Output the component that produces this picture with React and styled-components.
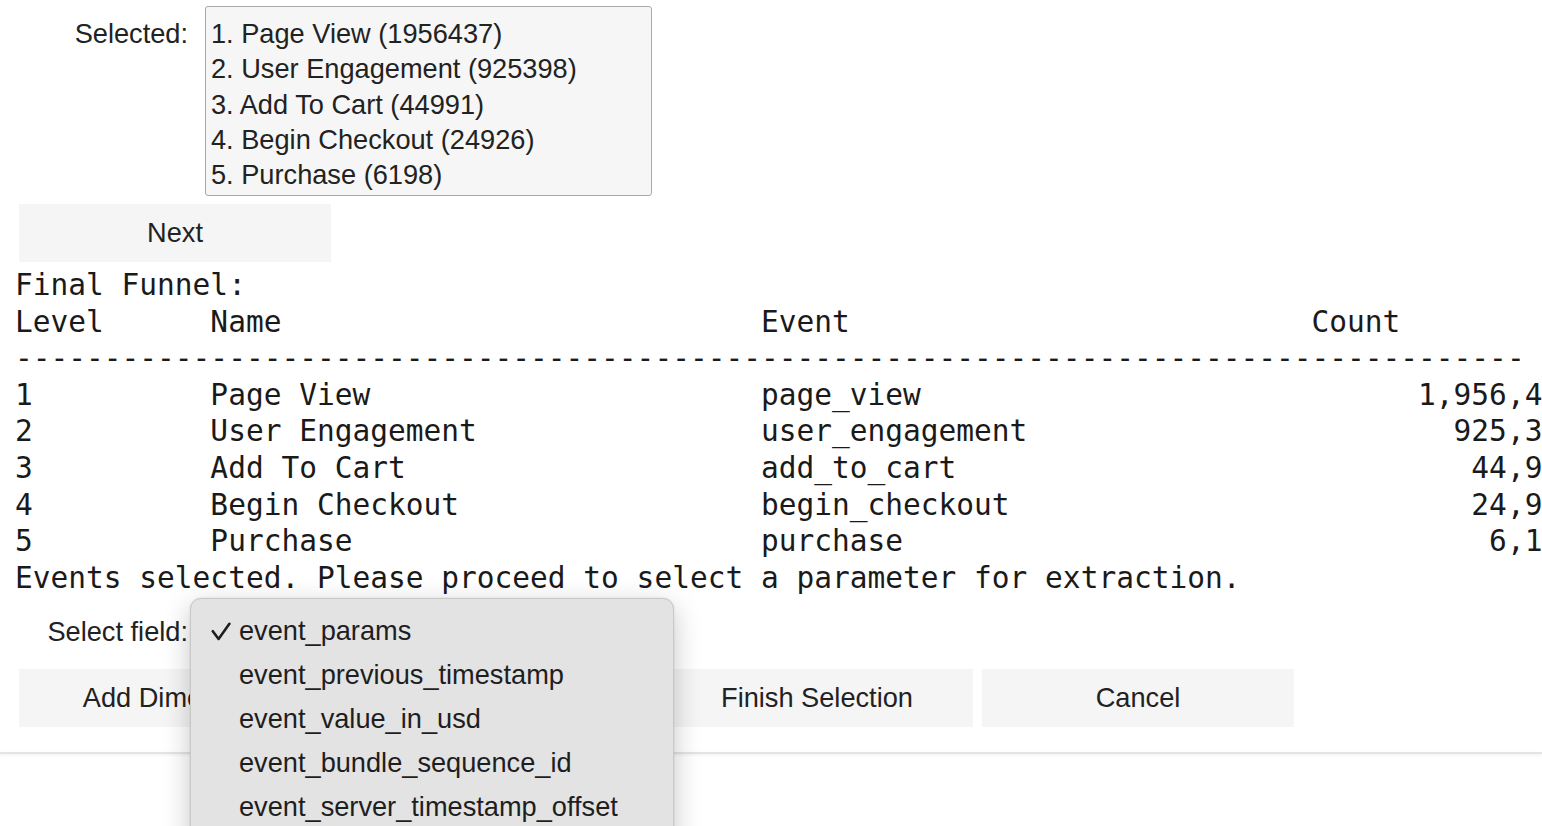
import styled, { createGlobalStyle } from 'styled-components'

const GlobalStyle = createGlobalStyle`
  html, body {
    margin: 0;
    padding: 0;
    background: #ffffff;
    overflow: hidden;
  }
  #root {
    width: 1542px;
    height: 826px;
    overflow: hidden;
  }
`

const SANS = `'Liberation Sans', Arial, sans-serif`
const MONO = `'DejaVu Sans Mono', 'Liberation Mono', monospace`

const Page = styled.div`
  position: relative;
  width: 1542px;
  height: 826px;
  overflow: hidden;
  font-family: ${SANS};
  color: #222222;
`

const OutputArea = styled.div`
  padding: 6px 0 25px 13px;
`

const WidgetRow = styled.div`
  display: flex;
  align-items: ${(p) => (p.$top ? 'flex-start' : 'center')};
  margin-left: 6px;
  margin-top: ${(p) => p.$mt || 0}px;
  height: ${(p) => (p.$h ? `${p.$h}px` : 'auto')};
`

const Label = styled.div`
  width: 169px;
  flex: none;
  text-align: right;
  font-size: 27.2px;
  line-height: 35px;
  margin-top: ${(p) => p.$mt || 0}px;
`

const ListBox = styled.div`
  box-sizing: border-box;
  width: 447px;
  height: 190px;
  margin-left: 17px;
  padding: 9px 5px 0;
  background: #f6f6f6;
  border: 1.5px solid #a9a9a9;
  border-radius: 3px;
  overflow: hidden;
`

const ListOption = styled.div`
  font-size: 27.2px;
  line-height: 35.3px;
  white-space: nowrap;
`

const ButtonRow = styled.div`
  display: flex;
  gap: 9px;
  margin-left: 6px;
  margin-top: ${(p) => p.$mt || 0}px;
`

const Button = styled.button`
  box-sizing: border-box;
  width: 312px;
  height: 58px;
  border: none;
  border-radius: 0;
  background: #f5f5f5;
  color: #222222;
  font-family: ${SANS};
  font-size: 27.2px;
  padding: 0;
  white-space: nowrap;
  overflow: hidden;
`

const Pre = styled.pre`
  margin: 5px 0 0 2px;
  font-family: ${MONO};
  font-size: 29.5px;
  line-height: 36.6px;
  color: #1a1a1a;
  white-space: pre;
`

const Divider = styled.div`
  height: 2px;
  background: #e4e4e4;
  box-shadow: 0 1px 3px rgba(0, 0, 0, 0.08);
`

const Popup = styled.div`
  position: absolute;
  left: 190px;
  top: 598px;
  width: 484px;
  height: 280px;
  box-sizing: border-box;
  padding-top: 10px;
  background: #e3e3e3;
  border: 1px solid #c9c9c9;
  border-radius: 11px;
  box-shadow: 0 8px 28px rgba(0, 0, 0, 0.22), 0 0 2px rgba(0, 0, 0, 0.12);
`

const PopupItem = styled.div`
  display: flex;
  align-items: center;
  height: 44px;
  padding-left: 20px;
  font-size: 27.2px;
  color: #1e1e1e;
  white-space: nowrap;
`

const CheckSlot = styled.span`
  width: 28px;
  flex: none;
  display: flex;
  align-items: center;
`

const Check = () => (
  <svg width='20' height='19' viewBox='0 0 20 19'>
    <path d='M1.8 9.2 L7.6 17 L18.4 1.8' fill='none' stroke='#1e1e1e' strokeWidth='2.6' strokeLinecap='round' strokeLinejoin='round' />
  </svg>
)

const selected = [
  '1. Page View (1956437)',
  '2. User Engagement (925398)',
  '3. Add To Cart (44991)',
  '4. Begin Checkout (24926)',
  '5. Purchase (6198)',
]

const funnel = [
  [1, 'Page View', 'page_view', 1956437],
  [2, 'User Engagement', 'user_engagement', 925398],
  [3, 'Add To Cart', 'add_to_cart', 44991],
  [4, 'Begin Checkout', 'begin_checkout', 24926],
  [5, 'Purchase', 'purchase', 6198],
]

const fields = [
  'event_params',
  'event_previous_timestamp',
  'event_value_in_usd',
  'event_bundle_sequence_id',
  'event_server_timestamp_offset',
]

const buildReport = () => {
  const lines = ['Final Funnel:']
  lines.push('Level'.padEnd(11) + 'Name'.padEnd(31) + 'Event'.padEnd(31) + 'Count')
  lines.push('-'.repeat(85))
  funnel.forEach(([lvl, name, ev, count]) => {
    lines.push(
      String(lvl).padEnd(11) + name.padEnd(31) + ev.padEnd(31) + count.toLocaleString('en-US').padStart(15),
    )
  })
  lines.push('Events selected. Please proceed to select a parameter for extraction.')
  return lines.join('\n')
}

const App = () => {
  return (
    <Page>
      <GlobalStyle />
      <OutputArea>
        <WidgetRow $top>
          <Label $mt={10}>Selected:</Label>
          <ListBox>
            {selected.map((s) => (
              <ListOption key={s}>{s}</ListOption>
            ))}
          </ListBox>
        </WidgetRow>

        <ButtonRow $mt={8}>
          <Button>Next</Button>
        </ButtonRow>

        <Pre>{buildReport()}</Pre>

        <WidgetRow $mt={16} $h={38}>
          <Label>Select field:</Label>
        </WidgetRow>

        <ButtonRow $mt={19}>
          <Button>Add Dimension</Button>
          <Button>Add Metric</Button>
          <Button>Finish Selection</Button>
          <Button>Cancel</Button>
        </ButtonRow>
      </OutputArea>
      <Divider />

      <Popup>
        {fields.map((f, i) => (
          <PopupItem key={f}>
            <CheckSlot>{i === 0 && <Check />}</CheckSlot>
            {f}
          </PopupItem>
        ))}
      </Popup>
    </Page>
  )
}

export default App
